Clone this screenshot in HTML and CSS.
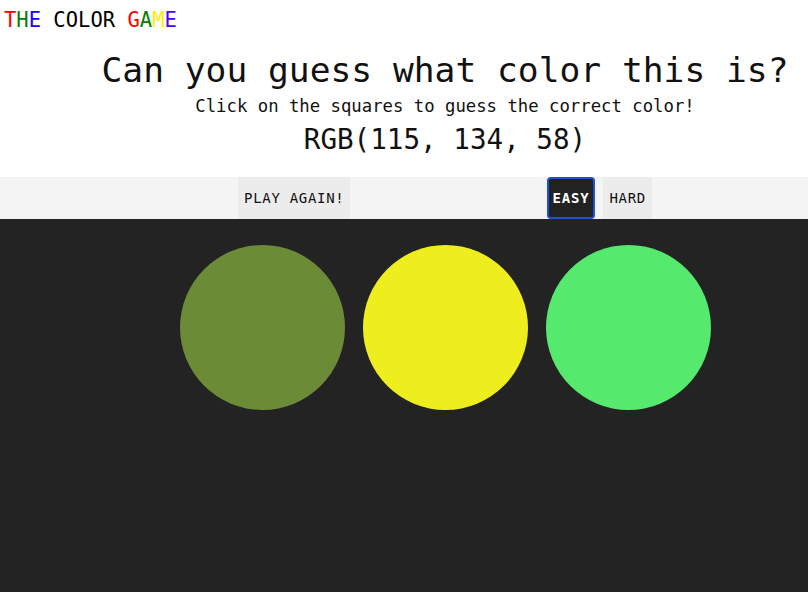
FILE: index.html
```html
<!DOCTYPE html>
<html lang="en">
<head>
<meta charset="utf-8">
<title>The Color Game</title>
<link rel="stylesheet" href="styles.css">
</head>
<body>
  <header class="header">
    <div class="logo"><span class="c-red">T</span><span class="c-green">H</span><span class="c-blue">E</span> COLOR <span class="c-red">G</span><span class="c-green">A</span><span class="c-yellow">M</span><span class="c-indigo">E</span></div>
    <div class="intro">
      <h1 class="question">Can you guess what color this is?</h1>
      <p class="hint">Click on the squares to guess the correct color!</p>
      <p class="rgb">RGB(115, 134, 58)</p>
    </div>
  </header>
  <nav class="bar">
    <div class="bar-inner">
      <button class="btn">PLAY AGAIN!</button>
      <div class="modes">
        <button class="btn btn-active">EASY</button>
        <button class="btn">HARD</button>
      </div>
    </div>
  </nav>
  <main class="board">
    <div class="circles">
      <div class="circle olive"></div>
      <div class="circle yellow"></div>
      <div class="circle green"></div>
    </div>
  </main>
</body>
</html>
```

FILE: styles.css
```css
html, body {
  margin: 0;
  padding: 0;
  height: 100%;
}
body {
  font-family: "DejaVu Sans Mono", "Liberation Mono", monospace;
  color: #111;
  background: #232323;
  display: flex;
  flex-direction: column;
}
.header {
  background: #fff;
  padding: 7px 0 20px;
}
.logo {
  font-size: 20.5px;
  line-height: 26px;
  margin-left: 4px;
  color: #000;
}
.c-red { color: #ff0000; }
.c-green { color: #008000; }
.c-blue { color: #1a00ff; }
.c-yellow { color: #ffee00; }
.c-indigo { color: #4b00ff; }
.intro {
  padding-left: 82px;
  text-align: center;
}
.question {
  font-size: 34.6px;
  font-weight: normal;
  line-height: 42px;
  margin: 16px 0 0;
}
.hint {
  font-size: 17.3px;
  line-height: 22px;
  margin: 4px 0 0;
}
.rgb {
  font-size: 27.6px;
  line-height: 34px;
  margin: 6px 0 0;
}
.bar {
  background: #f4f4f4;
  height: 42px;
}
.bar-inner {
  width: 414px;
  margin-left: calc(82px + (100% - 82px - 414px) / 2);
  height: 100%;
  display: flex;
  justify-content: space-between;
}
.modes {
  display: flex;
  gap: 8px;
}
.btn {
  font-family: inherit;
  font-size: 14px;
  letter-spacing: 0.7px;
  color: #111;
  background: #ececec;
  border: 2px solid transparent;
  border-radius: 0;
  padding: 0 4px;
  height: 42px;
  cursor: pointer;
}
.btn-active {
  background: #222;
  color: #fff;
  font-weight: bold;
  border-color: #1f4fd6;
  border-radius: 4px;
  letter-spacing: 0.8px;
}
.board {
  flex: 1;
  padding-left: 82px;
}
.circles {
  display: flex;
  justify-content: center;
  gap: 18px;
  padding-top: 26px;
}
.circle {
  width: 165px;
  height: 165px;
  border-radius: 50%;
}
.olive { background: #6b8b37; }
.yellow { background: #eeee1e; }
.green { background: #55ea6e; }
```
